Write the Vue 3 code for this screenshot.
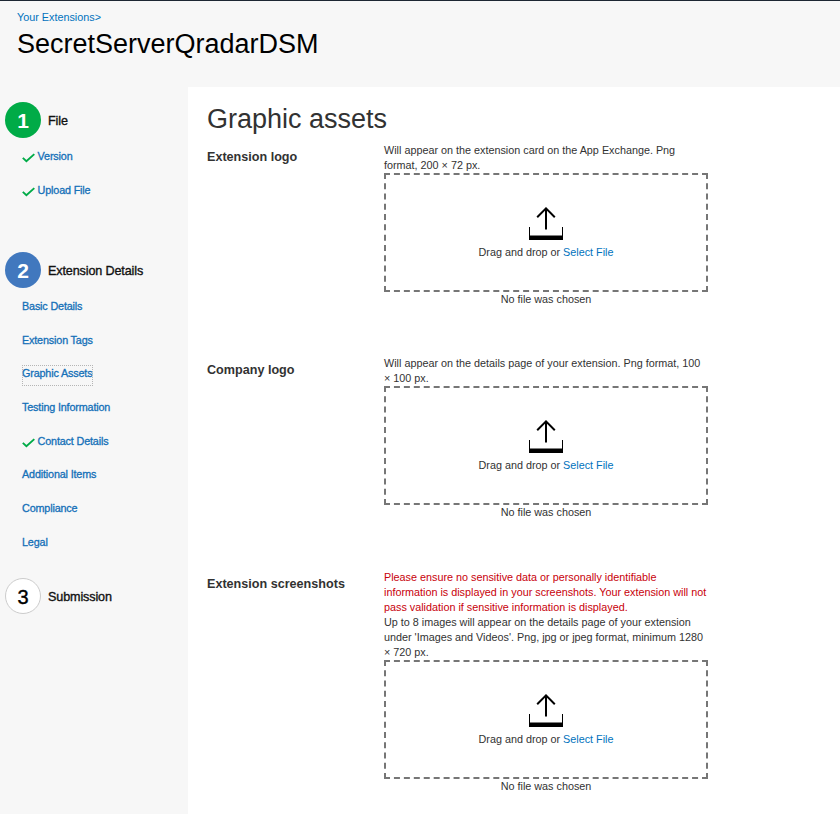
<script setup>
const steps = [
  {
    number: 1,
    title: 'File',
    state: 'done',
    items: [
      { label: 'Version', checked: true },
      { label: 'Upload File', checked: true },
    ],
  },
  {
    number: 2,
    title: 'Extension Details',
    state: 'current',
    items: [
      { label: 'Basic Details' },
      { label: 'Extension Tags' },
      { label: 'Graphic Assets', focused: true },
      { label: 'Testing Information' },
      { label: 'Contact Details', checked: true },
      { label: 'Additional Items' },
      { label: 'Compliance' },
      { label: 'Legal' },
    ],
  },
  { number: 3, title: 'Submission', state: 'pending', items: [] },
]

const assets = [
  {
    label: 'Extension logo',
    hint: 'Will appear on the extension card on the App Exchange. Png format, 200 × 72 px.',
  },
  {
    label: 'Company logo',
    hint: 'Will appear on the details page of your extension. Png format, 100 × 100 px.',
  },
  {
    label: 'Extension screenshots',
    warning:
      'Please ensure no sensitive data or personally identifiable information is displayed in your screenshots. Your extension will not pass validation if sensitive information is displayed.',
    hint: "Up to 8 images will appear on the details page of your extension under 'Images and Videos'. Png, jpg or jpeg format, minimum 1280 × 720 px.",
  },
]
</script>

<template>
  <div class="page">
    <header class="header">
      <a class="crumb">Your Extensions&gt;</a>
      <h1 class="name">SecretServerQradarDSM</h1>
    </header>
    <div class="body">
      <nav class="sidebar">
        <section v-for="step in steps" :key="step.number" class="step" :class="step.state">
          <div class="step-head">
            <span class="badge">{{ step.number }}</span>
            <span class="step-title">{{ step.title }}</span>
          </div>
          <ul v-if="step.items.length" class="items">
            <li v-for="item in step.items" :key="item.label" class="item">
              <a class="link" :class="{ focused: item.focused }">
                <svg v-if="item.checked" class="check" width="13" height="10" viewBox="0 0 13 10">
                  <path d="M0.8 4.9 L4.4 8.2 L12.3 1.1" fill="none" stroke="#00ab47" stroke-width="1.9" />
                </svg>
                <span>{{ item.label }}</span>
              </a>
            </li>
          </ul>
        </section>
      </nav>
      <main class="main">
        <h2 class="title">Graphic assets</h2>
        <section v-for="asset in assets" :key="asset.label" class="asset">
          <h3 class="label">{{ asset.label }}</h3>
          <div class="field">
            <p v-if="asset.warning" class="warning">{{ asset.warning }}</p>
            <p class="hint">{{ asset.hint }}</p>
            <div class="dropzone">
              <svg class="upload" width="34" height="33" viewBox="0 0 34 33">
                <path d="M0 20h1v8.6h32V20h1v13H0z" fill="#000" />
                <path d="M17 22.5V1.2M8.2 10.2L17 1.4l8.8 8.8" fill="none" stroke="#000" stroke-width="2" />
              </svg>
              <p class="prompt">Drag and drop or <a class="select">Select File</a></p>
            </div>
            <p class="status">No file was chosen</p>
          </div>
        </section>
      </main>
    </div>
  </div>
</template>

<style>
body {
  background: #f7f7f7;
}
</style>

<style scoped>
.page {
  box-sizing: border-box;
  display: flex;
  flex-direction: column;
  width: 840px;
  height: 814px;
  overflow: hidden;
  border-top: 1px solid #1d2733;
  background: #f7f7f7;
  color: #323232;
  font-family: "Liberation Sans", Arial, sans-serif;
  font-size: 10.8px;
  line-height: 15px;
}
h1, h2, h3, p, ul {
  margin: 0;
  padding: 0;
  font-weight: normal;
}
.header {
  box-sizing: border-box;
  flex: none;
  height: 86px;
  padding: 9px 17px 0;
}
.crumb {
  display: block;
  color: #0072bd;
}
.name {
  margin-top: 3px;
  color: #000;
  font-size: 27px;
  line-height: 32px;
}
.body {
  display: flex;
  flex: 1;
  min-height: 0;
}
.sidebar {
  flex: none;
  box-sizing: border-box;
  width: 188px;
  padding: 15px 0 0 5px;
}
.step.done {
  height: 150px;
}
.step.current {
  height: 326px;
}
.step-head {
  display: flex;
  align-items: center;
  gap: 7px;
  height: 36px;
}
.badge {
  box-sizing: border-box;
  width: 36px;
  height: 36px;
  border-radius: 50%;
  color: #fff;
  font-size: 21px;
  font-weight: bold;
  line-height: 38px;
  text-align: center;
}
.done .badge {
  background: #00ab47;
}
.current .badge {
  background: #4178be;
}
.pending .badge {
  border: 1px solid #ccc;
  background: #fff;
  color: #000;
  font-weight: normal;
  font-size: 20px;
  line-height: 36px;
  -webkit-text-stroke: 0.4px #000;
}
.step-title {
  padding-top: 2px;
  color: #111;
  font-size: 12.6px;
  letter-spacing: -0.13px;
  -webkit-text-stroke: 0.35px #111;
}
.items {
  padding: 10px 0 0 17px;
  list-style: none;
}
.item {
  display: flex;
  align-items: flex-start;
  height: 33.7px;
}
.link {
  display: flex;
  box-sizing: border-box;
  height: 21px;
  color: #1470b8;
  letter-spacing: -0.16px;
  line-height: 17.5px;
  -webkit-text-stroke: 0.3px #1470b8;
}
.link.focused {
  padding-right: 0.6px;
  outline: 1px dotted #b5b5b5;
  outline-offset: -1px;
}
.check {
  flex: none;
  margin: 5px 2.6px 0 0;
}
.main {
  flex: 1;
  padding: 16px 0 0 19px;
  background: #fff;
}
.title {
  margin-bottom: 8px;
  font-size: 27px;
  line-height: 32px;
}
.asset {
  display: flex;
  margin-bottom: 49px;
}
.asset:last-child {
  margin-top: 50px;
}
.label {
  flex: none;
  width: 177px;
  padding-top: 7px;
  font-size: 12.6px;
  font-weight: bold;
}
.field {
  width: 324px;
}
.warning {
  color: #c8000a;
}
.dropzone {
  box-sizing: border-box;
  display: flex;
  flex-direction: column;
  align-items: center;
  height: 119px;
  padding-top: 32px;
  border: 2px dashed #767676;
}
.prompt {
  margin-top: 5px;
}
.select {
  color: #0072bd;
}
.status {
  text-align: center;
}
</style>
